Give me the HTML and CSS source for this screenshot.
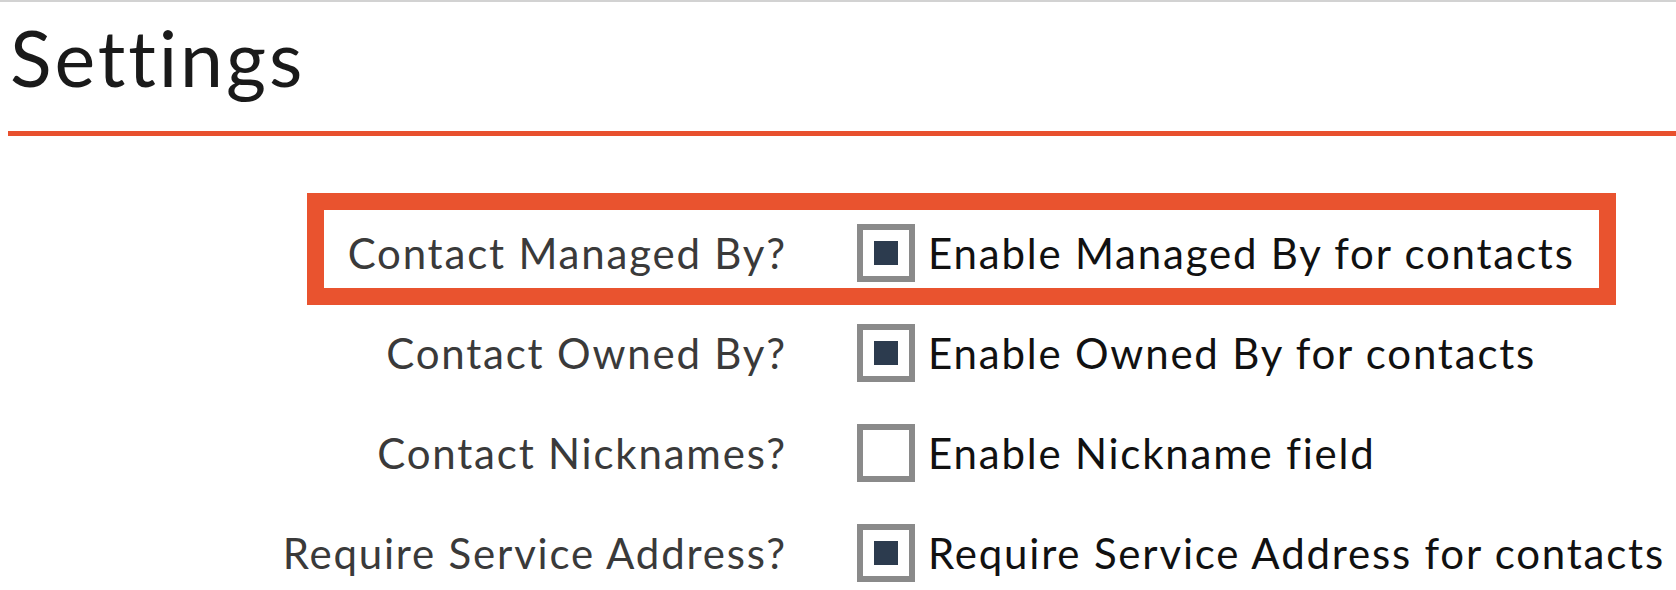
FILE: index.html
```html
<!DOCTYPE html>
<html lang="en">
<head>
<meta charset="utf-8">
<title>Settings</title>
<link rel="stylesheet" href="styles.css">
</head>
<body>
<div class="page">
  <header class="page-header">
    <h1 class="page-title">Settings</h1>
  </header>
  <div class="settings">
    <div class="row row-highlight">
      <span class="label">Contact Managed By?</span>
      <span class="checkbox checked"></span>
      <span class="option">Enable Managed By for contacts</span>
    </div>
    <div class="row">
      <span class="label">Contact Owned By?</span>
      <span class="checkbox checked"></span>
      <span class="option">Enable Owned By for contacts</span>
    </div>
    <div class="row">
      <span class="label">Contact Nicknames?</span>
      <span class="checkbox"></span>
      <span class="option">Enable Nickname field</span>
    </div>
    <div class="row">
      <span class="label">Require Service Address?</span>
      <span class="checkbox checked"></span>
      <span class="option">Require Service Address for contacts</span>
    </div>
  </div>
</div>
</body>
</html>
```
FILE: styles.css
```css
html, body {
  margin: 0;
  padding: 0;
  background: #ffffff;
}

body {
  font-family: "Lato", "Liberation Sans", sans-serif;
  color: #111111;
  overflow: hidden;
}

.page {
  border-top: 2px solid #d2d2d2;
}

.page-header {
  margin-left: 8px;
  padding-top: 10px;
  border-bottom: 5px solid #e8502e;
  height: 119px;
  box-sizing: content-box;
}

.page-title {
  margin: 0 0 0 2px;
  font-weight: 400;
  font-size: 77px;
  line-height: 90px;
  color: #1a1a1a;
  letter-spacing: 2.9px;
}

.settings {
  display: flex;
  flex-direction: column;
  padding-top: 67px;
}

.row {
  position: relative;
  display: grid;
  grid-template-columns: 785px 58px auto;
  align-items: center;
  height: 100px;
}

.label {
  text-align: right;
  font-size: 42px;
  letter-spacing: 1.8px;
  margin-right: -1.8px;
  color: #3a3a3a;
  white-space: nowrap;
}

.checkbox {
  grid-column: 2;
  margin-left: 72px;
  width: 46px;
  height: 46px;
  border: 6px solid #8a8a8a;
  background: #ffffff;
  display: flex;
  align-items: center;
  justify-content: center;
}

.checkbox.checked::after {
  content: "";
  width: 24px;
  height: 24px;
  background: #2c3b4e;
}

.option {
  margin-left: 85px;
  font-size: 42px;
  letter-spacing: 1.8px;
  color: #111111;
  white-space: nowrap;
}

.row-highlight::before {
  content: "";
  position: absolute;
  left: 307px;
  top: -10px;
  width: 1275px;
  height: 78px;
  border: 17px solid #e9532f;
  pointer-events: none;
}
```
